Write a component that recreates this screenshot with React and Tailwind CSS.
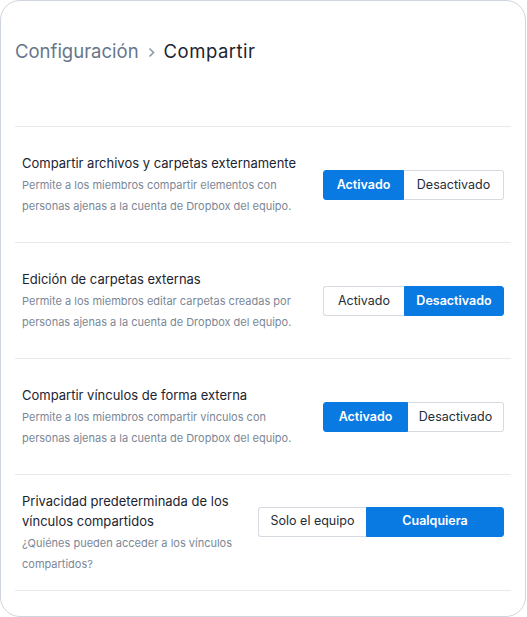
import React, { useState } from "react";

const settings = [
  {
    title: "Compartir archivos y carpetas externamente",
    desc: "Permite a los miembros compartir elementos con personas ajenas a la cuenta de Dropbox del equipo.",
    options: ["Activado", "Desactivado"],
    value: 0,
    widths: ["w-[81px]", "w-[100px]"],
  },
  {
    title: "Edición de carpetas externas",
    desc: "Permite a los miembros editar carpetas creadas por personas ajenas a la cuenta de Dropbox del equipo.",
    options: ["Activado", "Desactivado"],
    value: 1,
    widths: ["w-[81px]", "w-[100px]"],
  },
  {
    title: "Compartir vínculos de forma externa",
    desc: "Permite a los miembros compartir vínculos con personas ajenas a la cuenta de Dropbox del equipo.",
    options: ["Activado", "Desactivado"],
    value: 0,
    widths: ["w-[85px]", "w-[96px]"],
  },
  {
    title: "Privacidad predeterminada de los vínculos compartidos",
    desc: "¿Quiénes pueden acceder a los vínculos compartidos?",
    options: ["Solo el equipo", "Cualquiera"],
    value: 1,
    widths: ["w-[108px]", "w-[138px]"],
    raised: true,
  },
];

const Segmented = ({ options, value, widths, onChange, raised }) => (
  <div className={`flex h-[30px] shrink-0 ${raised ? "mb-[22px]" : "mt-[1px]"}`}>
    {options.map((opt, i) => {
      const active = i === value;
      const first = i === 0;
      return (
        <button
          key={opt}
          onClick={() => onChange(i)}
          className={`${widths[i]} h-full text-[12.5px] ${
            first ? "rounded-l-[3px]" : "rounded-r-[3px]"
          } ${
            active
              ? "bg-[#0a7ae3] text-white font-semibold border border-[#0a7ae3]"
              : `bg-white text-[#242d38] border border-[#d6dbe1] ${first ? "border-r-0" : "border-l-0"}`
          }`}
        >
          {opt}
        </button>
      );
    })}
  </div>
);

export default function App() {
  const [values, setValues] = useState(settings.map((s) => s.value));

  return (
    <div
      className="w-[527px] h-[617px] bg-white"
      style={{ fontFamily: "Inter, 'Noto Sans', sans-serif" }}
    >
      <div className="w-[526px] h-[617px] border border-[#cfd5dd] rounded-[20px] pl-[14px] pr-[14px]">
        <div className="h-[125px] flex items-center pb-[24px]">
          <h1 className="text-[18.5px] text-[#1c2430] flex items-center">
            <span className="text-[#66768a]">Configuración</span>
            <svg width="7" height="11" viewBox="0 0 7 11" className="mx-[9px] mt-[2px]">
              <path d="M1.5 1.5 L5.5 5.5 L1.5 9.5" fill="none" stroke="#8d98a5" strokeWidth="1.6" />
            </svg>
            <span className="tracking-[0.5px]">Compartir</span>
          </h1>
        </div>

        <div className="border-t border-[#e6e9ed]">
          {settings.map((s, idx) => (
            <div
              key={s.title}
              className="h-[116px] border-b border-[#e6e9ed] flex items-center justify-between pl-[7px] pr-[7px]"
            >
              <div className="max-w-[275px]">
                <div className="text-[13px] leading-[20px] text-[#1c2430]">{s.title}</div>
                <div className="text-[11px] leading-[21px] text-[#7b8796] mt-[2px]">
                  {s.desc}
                </div>
              </div>
              <Segmented
                options={s.options}
                value={values[idx]}
                widths={s.widths}
                raised={s.raised}
                onChange={(v) =>
                  setValues((prev) => prev.map((p, j) => (j === idx ? v : p)))
                }
              />
            </div>
          ))}
        </div>
      </div>
    </div>
  );
}
